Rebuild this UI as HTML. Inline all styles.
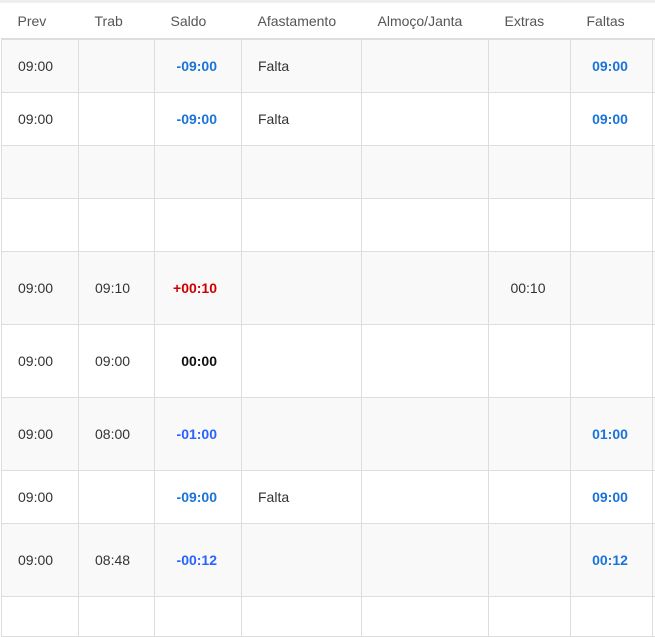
<!DOCTYPE html>
<html><head><meta charset="utf-8"><style>
body{margin:0;width:655px;height:600px;overflow:hidden;background:#fff;font-family:"Liberation Sans",Arial,sans-serif;font-size:14px;color:#333}
.top{position:absolute;left:0;top:0;width:655px;height:3px;background:#eee}
table{position:absolute;left:1px;top:3px;border-collapse:collapse;table-layout:fixed;width:740px}
th{height:36px;font-weight:normal;color:#555;text-align:left;padding:0 0 0 16px;border-bottom:2px solid #ddd;box-sizing:border-box}
td{border:1px solid #ddd;padding:0 0 0 16px;box-sizing:border-box}
tr.g td{background:#f9f9f9}
td.s{text-align:right;padding:0 24px 0 0;font-weight:bold}
td.c{text-align:center;padding:0 3px 0 0}
.b{color:#1a73d8;font-weight:bold}
.b2{color:#2962ff}
.r{color:#cc0000}
.k{color:#111}
</style></head><body>
<div class="top"></div>
<table>
<colgroup><col style="width:77px"><col style="width:76px"><col style="width:87px"><col style="width:120px"><col style="width:127px"><col style="width:82px"><col style="width:82px"><col style="width:89px"></colgroup>
<tr><th>Prev</th><th>Trab</th><th>Saldo</th><th>Afastamento</th><th>Almoço/Janta</th><th>Extras</th><th>Faltas</th><th></th></tr>
<tr class="g" style="height:53px"><td>09:00</td><td></td><td class="s b">-09:00</td><td>Falta</td><td></td><td></td><td class="c b">09:00</td><td></td></tr>
<tr style="height:53px"><td>09:00</td><td></td><td class="s b">-09:00</td><td>Falta</td><td></td><td></td><td class="c b">09:00</td><td></td></tr>
<tr class="g" style="height:53px"><td></td><td></td><td></td><td></td><td></td><td></td><td></td><td></td></tr>
<tr style="height:53px"><td></td><td></td><td></td><td></td><td></td><td></td><td></td><td></td></tr>
<tr class="g" style="height:73px"><td>09:00</td><td>09:10</td><td class="s r">+00:10</td><td></td><td></td><td class="c">00:10</td><td></td><td></td></tr>
<tr style="height:73px"><td>09:00</td><td>09:00</td><td class="s k">00:00</td><td></td><td></td><td></td><td></td><td></td></tr>
<tr class="g" style="height:73px"><td>09:00</td><td>08:00</td><td class="s b b2">-01:00</td><td></td><td></td><td></td><td class="c b">01:00</td><td></td></tr>
<tr style="height:53px"><td>09:00</td><td></td><td class="s b">-09:00</td><td>Falta</td><td></td><td></td><td class="c b">09:00</td><td></td></tr>
<tr class="g" style="height:73px"><td>09:00</td><td>08:48</td><td class="s b b2">-00:12</td><td></td><td></td><td></td><td class="c b">00:12</td><td></td></tr>
<tr style="height:40px"><td></td><td></td><td></td><td></td><td></td><td></td><td></td><td></td></tr>
</table>
</body></html>
